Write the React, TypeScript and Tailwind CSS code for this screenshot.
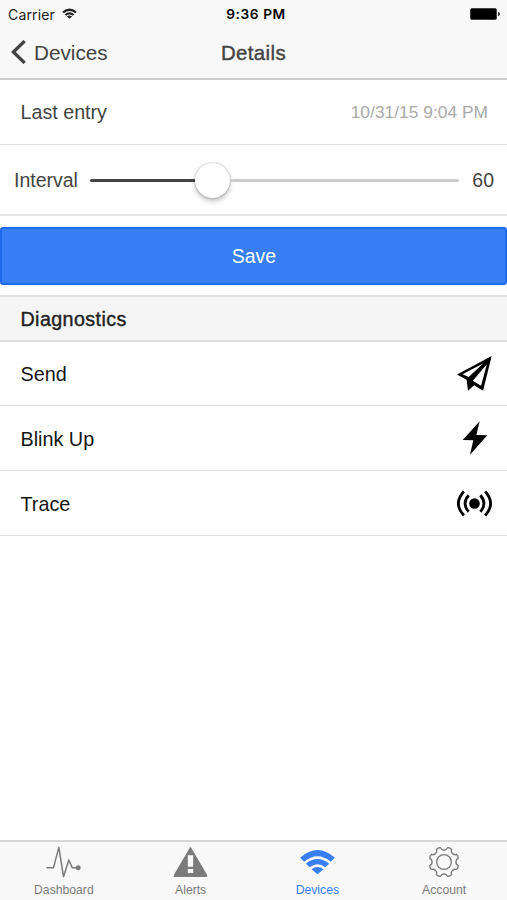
import type { ReactNode } from "react";
import clsx from "clsx";

function SendIcon() {
  return (
    <svg viewBox="0 0 102 102" className="h-[35px] w-[35px]">
      <path
        fillRule="evenodd"
        d="M101 0 76 101 50 85 32 101 28 69 0 54ZM76 22 16 53 34 61ZM87 24 46 72 70 87Z"
      />
    </svg>
  );
}

function FlashIcon() {
  return (
    <svg viewBox="0 0 102 102" className="h-[34px] w-[34px]">
      <path d="M65 1 14 57 46 58 36 101 88 43 55 42Z" />
    </svg>
  );
}

function RadioWavesIcon() {
  return (
    <svg viewBox="0 0 102 102" className="h-[35px] w-[35px]">
      <circle cx="51" cy="51" r="15.5" />
      <g fill="none" stroke="currentColor" strokeWidth="8">
        <path d="M34 27Q13 51 34 75M68 27Q89 51 68 75M20 16Q-12 51 20 86M82 16Q114 51 82 86" />
      </g>
    </svg>
  );
}

function PulseIcon() {
  return (
    <svg viewBox="0 0 104 96" className="h-8 w-[35px]">
      <path
        d="M1 65H22L38 4 52 92 68 42 78 65H95"
        fill="none"
        stroke="currentColor"
        strokeWidth="4.5"
        strokeLinejoin="round"
      />
      <circle cx="96" cy="65" r="7.5" fill="currentColor" />
    </svg>
  );
}

function AlertIcon() {
  return (
    <svg viewBox="0 0 104 96" className="h-8 w-[35px]">
      <path
        fill="currentColor"
        fillRule="evenodd"
        d="M52 4Q54 4 56 8L102 87Q104 93 100 93H4Q0 93 2 87L48 8Q50 4 52 4ZM44 28V62H60V28ZM44 69V81H60V69Z"
      />
    </svg>
  );
}

function WifiIcon({ className }: { className: string }) {
  return (
    <svg viewBox="0 0 104 78" className={className}>
      <path
        fill="currentColor"
        d="M52 76 34 61Q52 47 70 61ZM29 55 17 44Q52 16 87 44L75 55Q52 36 29 55ZM12 38 0 26Q52-20 104 26L92 38Q52 5 12 38Z"
      />
    </svg>
  );
}

// eight rounded teeth around a ring
const gearPath = Array.from({ length: 8 }, (_, i) => {
  const at = (r: number, deg: number) => {
    const a = ((i * 45 + deg) * Math.PI) / 180;
    return `${(48 + r * Math.cos(a)).toFixed(1)} ${(48 + r * Math.sin(a)).toFixed(1)}`;
  };
  return `${i ? "L" : "M"}${at(44, 14)}Q${at(47, 22.5)} ${at(44, 31)}Q${at(36, 34)} ${at(36, 45)}Q${at(36, 56)} ${at(44, 59)}`;
}).join("");

function GearIcon() {
  return (
    <svg viewBox="0 0 96 96" className="h-8 w-8">
      <g fill="none" stroke="currentColor" strokeWidth="4" strokeLinejoin="round">
        <path d={gearPath + "Z"} />
        <circle cx="48" cy="48" r="22" />
      </g>
    </svg>
  );
}

function StatusBar() {
  return (
    <div className="grid h-7 grid-cols-3 items-center pr-[7px] pl-2 font-['Inter',sans-serif] text-[14px] text-[#222]">
      <div className="flex items-center gap-[7px]">
        <span className="tracking-[0.15px]">Carrier</span>
        <WifiIcon className="mb-0.5 h-[11px] w-[15px]" />
      </div>
      <span className="pl-1 text-center text-[13.7px] font-semibold tracking-[0.6px] whitespace-nowrap text-black">
        9:36 PM
      </span>
      <div className="flex items-center justify-end gap-px">
        <div className="h-3 w-[27px] rounded-[2px] border border-[#444] bg-black" />
        <div className="h-1 w-[2px] rounded-r bg-[#333]" />
      </div>
    </div>
  );
}

function Header() {
  return (
    <header className="h-20 border-b-2 border-[#cbcbcb] bg-[#f8f8f8]">
      <StatusBar />
      <div className="grid h-[50px] grid-cols-3 items-center text-[#444]">
        <button className="flex items-center gap-[8px] pl-[11px] text-[20.7px]">
          <svg viewBox="0 0 44 70" className="mb-0.5 h-6 w-[15px]">
            <path d="M40 3 7 35 40 67" fill="none" stroke="currentColor" strokeWidth="10" />
          </svg>
          Devices
        </button>
        <h1 className="text-center text-[20.4px] tracking-[0.4px] [-webkit-text-stroke:0.4px]">
          Details
        </h1>
      </div>
    </header>
  );
}

type ItemProps = {
  label: string;
  icon: ReactNode;
};

function DiagnosticItem({ label, icon }: ItemProps) {
  return (
    <li className="flex h-[65px] items-center justify-between border-b-[1.5px] border-[#dedede] pr-[15px] pl-[20.5px] text-[19.8px] text-[#151515]">
      <span className="pt-[3px]">{label}</span>
      <span className="text-black">{icon}</span>
    </li>
  );
}

function Tab({ label, icon, active }: ItemProps & { active?: boolean }) {
  return (
    <button
      className={clsx(
        "flex flex-1 flex-col items-center pt-[2px] pl-px text-[12.2px] leading-[14px]",
        active ? "text-[#387ef5]" : "text-[#7b7b7b]"
      )}
    >
      <span className="flex h-9 items-center">{icon}</span>
      <span className="pt-[3px]">{label}</span>
    </button>
  );
}

export default function App() {
  return (
    <div className="flex h-[900px] w-[507px] flex-col overflow-hidden bg-white font-['Liberation_Sans',Arial,sans-serif]">
      <Header />
      <main className="flex-1">
        <div className="flex h-[65px] items-center justify-between border-b border-[#dedede] pt-px pr-[19px] pl-[20.5px] text-[#444]">
          <span className="pt-px text-[19.7px]">Last entry</span>
          <span className="text-[17.4px] text-[#aaa]">10/31/15 9:04 PM</span>
        </div>
        <div className="flex h-[71px] items-center border-b-2 border-[#e6e6e6] pt-px pr-[13px] pl-[14px] text-[19.5px] text-[#444]">
          <span className="w-[76px] pt-[2px]">Interval</span>
          <div className="flex h-9 w-[369px] items-center">
            <div className="h-[3px] w-[105px] rounded-l bg-[#444]" />
            <div className="h-[35px] w-[35px] rounded-full bg-white shadow-[0_0_2px_rgba(0,0,0,0.35),0_3px_5px_rgba(0,0,0,0.25)]" />
            <div className="h-[3px] flex-1 rounded-r bg-[#ccc]" />
          </div>
          <span className="ml-auto pt-[2px]">60</span>
        </div>
        <button className="mt-[11px] block h-[58px] w-full rounded-[3px] border-2 border-[#2069ec] bg-[#387ef5] pt-[2px] pl-px text-[19.5px] text-white">
          Save
        </button>
        <h2 className="mt-[10px] flex h-[47px] items-center border-y-2 border-[#e0e0e0] bg-[#f5f5f5] pt-[2px] pl-[20.5px] text-[19.7px] tracking-[0.4px] text-[#222] [-webkit-text-stroke:0.4px]">
          Diagnostics
        </h2>
        <ul className="-mt-px">
          <DiagnosticItem label="Send" icon={<SendIcon />} />
          <DiagnosticItem label="Blink Up" icon={<FlashIcon />} />
          <DiagnosticItem label="Trace" icon={<RadioWavesIcon />} />
        </ul>
      </main>
      <nav className="flex h-[60px] border-t-2 border-[#d8d8d8] bg-[#f8f8f8]">
        <Tab label="Dashboard" icon={<PulseIcon />} />
        <Tab label="Alerts" icon={<AlertIcon />} />
        <Tab label="Devices" icon={<WifiIcon className="h-[26px] w-[35px]" />} active />
        <Tab label="Account" icon={<GearIcon />} />
      </nav>
    </div>
  );
}
